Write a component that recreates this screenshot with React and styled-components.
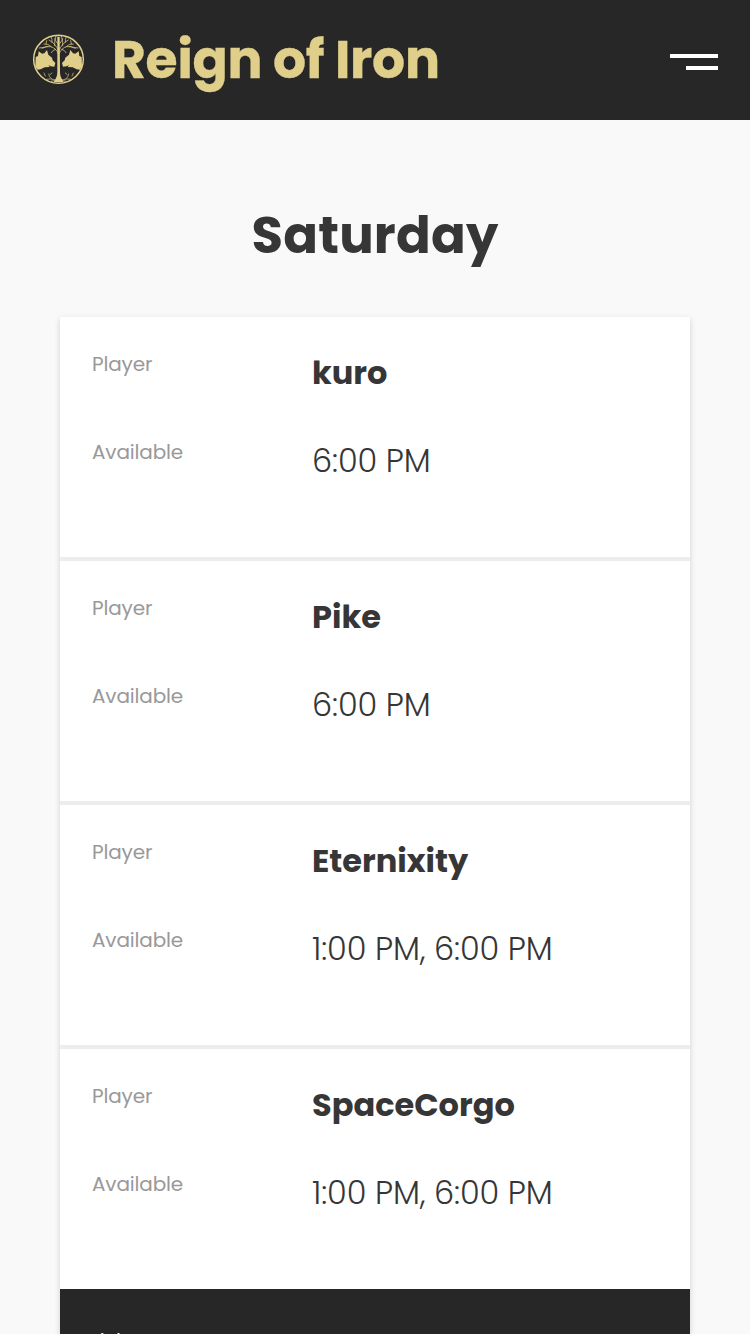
import React from "react";
import styled, { createGlobalStyle } from "styled-components";

const Global = createGlobalStyle`
  *{box-sizing:border-box}
  html,body{margin:0;background:#f9f9f9}
  body{font-family:Poppins,Inter,"Open Sans",sans-serif;color:#363636}
`;
const Header = styled.header`
  height:120px;background:#272727;display:flex;align-items:center;padding:0 32px;
`;
const Logo = styled.svg`width:53px;height:52px;flex:none;`;
const Brand = styled.div`
  margin-left:27px;color:#e0cf8b;font-weight:700;font-size:52px;line-height:78px;letter-spacing:-0.28px;white-space:nowrap;
  -webkit-text-stroke:0.3px #e0cf8b;
`;
const Burger = styled.div`
  margin-left:auto;display:flex;flex-direction:column;align-items:flex-end;gap:8px;padding-top:4px;
`;
const Line = styled.span`height:4px;width:${p => p.$w}px;background:#fff;`;
const Main = styled.main`padding:76px 60px 0;`;
const Title = styled.h1`
  margin:0 0 43px;font-size:51.2px;line-height:78px;font-weight:700;text-align:center;letter-spacing:0.2px;
`;
const Table = styled.section`box-shadow:0 2px 6px rgba(0,0,0,.16);background:#fff;`;
const Card = styled.article`
  height:${p => (p.$last ? 240 : 244)}px;padding:32px 32px 0;border-bottom:${p => (p.$last ? 0 : 4)}px solid #ededed;
`;
const Row = styled.div`display:grid;grid-template-columns:220px 1fr;height:88px;`;
const Label = styled.span`font-size:20px;line-height:30px;color:#999;font-weight:400;letter-spacing:-0.15px;`;
const Value = styled.span`
  font-size:32px;line-height:48px;font-weight:${p => (p.$bold ? 700 : 300)};white-space:nowrap;
  letter-spacing:${p => (p.$bold ? 0 : -0.08)}px;
`;
const Footer = styled.footer`
  height:45px;overflow:hidden;background:#272727;color:#fff;padding:37px 32px 0;font-size:20px;line-height:30px;
  letter-spacing:-0.8px;
`;

const players = [
  { name: "kuro", time: "6:00 PM" },
  { name: "Pike", time: "6:00 PM" },
  { name: "Eternixity", time: "1:00 PM, 6:00 PM" },
  { name: "SpaceCorgo", time: "1:00 PM, 6:00 PM" },
];

function HalfTree() {
  return (
    <g>
      <path fill="#e0cf8b" d="M47 99 54 96 56 82 66 89 73 88 81 78 85 92 96 101 98 109 106 117 103 128 92 127 85 123 89 129 74 130 62 136 53 137 46 128Z" />
      <path fill="none" stroke="#e0cf8b" strokeWidth="2.2" strokeLinecap="round" d="M114 88Q108 72 92 68Q78 66 66 73M114 78Q108 60 87 48M94 68Q84 58 72 60M104 65Q102 50 108 36M96 55Q97 45 94 40M84 67Q75 70 58 72M106 76Q98 78 94 86M78 59 80 50M112 58Q106 50 104 44" />
      <path fill="none" stroke="#e0cf8b" strokeWidth="2" strokeLinecap="round" d="M114 158Q110 170 94 172M106 168Q90 162 78 166M94 164Q86 158 86 150M76 156 72 147M91 151 96 147" />
    </g>
  );
}

function TreeLogo() {
  return (
    <Logo viewBox="36 30 159 156" aria-hidden="true">
      <ellipse cx="115.5" cy="106" rx="74.5" ry="72" fill="none" stroke="#e0cf8b" strokeWidth="4.5" />
      <path fill="#e0cf8b" d="M112 38H119L120 145Q120 160 131 174H101Q112 160 112 145Z" />
      <HalfTree />
      <g transform="translate(232 0) scale(-1 1)"><HalfTree /></g>
    </Logo>
  );
}

export default function App() {
  return (
    <>
      <Global />
      <Header>
        <TreeLogo />
        <Brand>Reign of Iron</Brand>
        <Burger><Line $w={48} /><Line $w={32} /></Burger>
      </Header>
      <Main>
        <Title>Saturday</Title>
        <Table>
          {players.map((p, i) => (
            <Card key={p.name} $last={i === players.length - 1}>
              <Row><Label>Player</Label><Value $bold>{p.name}</Value></Row>
              <Row><Label>Available</Label><Value>{p.time}</Value></Row>
            </Card>
          ))}
          <Footer>Links</Footer>
        </Table>
      </Main>
    </>
  );
}
